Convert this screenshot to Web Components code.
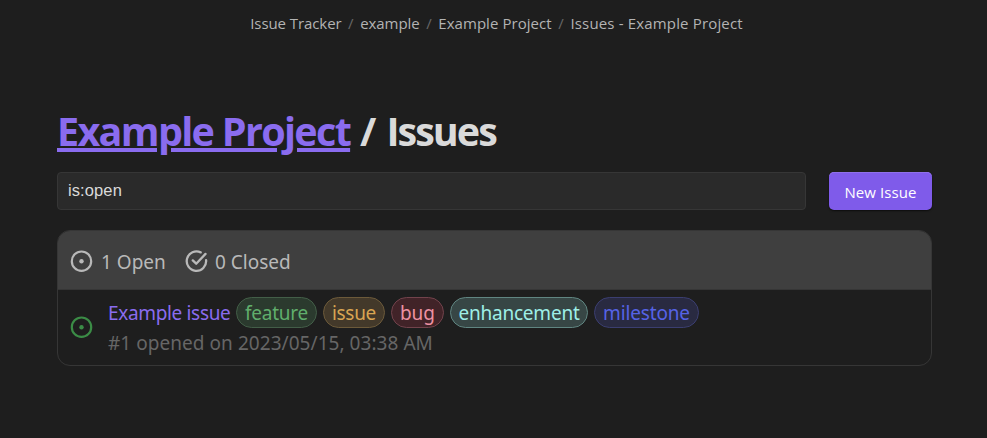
<!DOCTYPE html>
<html lang="en"><head><meta charset="utf-8"><title>Issues - Example Project</title>
<style>
html{background:#1e1e1e}
body{margin:0;height:438px;overflow:hidden;background:#1e1e1e;color:#dadada;font-family:"Open Sans","Noto Sans",sans-serif}
</style></head><body>
<issue-page></issue-page>
<script>
const define=(name,html)=>customElements.define(name,class extends HTMLElement{
  constructor(){super();this.attachShadow({mode:'open'}).innerHTML=html}
});

define('crumb-bar',`<style>
:host{display:flex;justify-content:center;height:48px;line-height:46px;font-size:15px;color:#b3b3b3;padding-left:6px;white-space:pre}
i{font-style:normal;color:#666;width:18.7px;text-align:center}
span{letter-spacing:-.08px}.mid{letter-spacing:.06px}.last{letter-spacing:.16px}
</style><span>Issue Tracker</span><i>/</i><span>example</span><i>/</i><span class="mid">Example Project</span><i>/</i><span class="last">Issues - Example Project</span>`);

define('page-title',`<style>
:host{display:block}
h1{margin:0;font-size:39.5px;line-height:54px;height:56px;font-weight:700;display:flex;white-space:pre;letter-spacing:-1.68px}
a{color:#8a6cef;text-decoration:underline;text-decoration-thickness:4px;text-underline-offset:2px;width:294px}
.slash{margin-left:9px;width:26.5px}
.here{letter-spacing:-2px}
</style><h1><a>Example Project</a><span class="slash">/</span> <span class="here">Issues</span></h1>`);

define('search-field',`<style>
:host{display:block;box-sizing:border-box;width:749px;height:38px;border:1px solid #363636;border-radius:4px;background:#2a2a2a;padding-left:10px;font:16.5px/35px "Liberation Sans",sans-serif;letter-spacing:.1px;color:#dadada}
</style><slot></slot>`);

define('action-button',`<style>
:host{display:flex;justify-content:center;box-sizing:border-box;width:103px;height:38px;border-radius:5px;background:#7f5bea;color:#fff;font-size:15px;line-height:40px;letter-spacing:.1px;box-shadow:inset 0 1px 0 #8f70ec,0 1px 2px #0009}
</style><slot></slot>`);

define('open-icon',`<style>:host{display:block;width:24px;height:24px}svg{display:block}</style>
<svg width="24" height="24" viewBox="0 0 24 24" fill="none" stroke="currentColor" stroke-width="2.2"><circle cx="12.5" cy="12.2" r="9.7"/><circle cx="12.5" cy="12.2" r="2.2" fill="currentColor" stroke="none"/></svg>`);

define('closed-icon',`<style>:host{display:block;width:24px;height:24px}svg{display:block}</style>
<svg width="24" height="24" viewBox="0 0 24 24" fill="none" stroke="currentColor" stroke-width="2.3" stroke-linecap="round" stroke-linejoin="round"><g transform="translate(.5 .2)"><path d="M16.2 3.2A9.7 9.7 0 1 0 21.6 11"/><path d="M8.3 11.2l3.4 3.3L21 4.7"/></g></svg>`);

define('issue-label',`<style>
:host{display:flex;justify-content:center;box-sizing:border-box;width:var(--w);height:31px;border:1px solid var(--line);border-radius:16px;background:var(--bg);color:var(--fg);line-height:31px;letter-spacing:var(--ls,0)}
</style><slot></slot>`);

define('issue-card',`<style>
:host{display:block;box-sizing:border-box;width:875px;height:136px;border:1px solid #363636;border-radius:13px;overflow:hidden;font-family:"Noto Sans","Open Sans",sans-serif;font-size:19px}
header{display:flex;height:59px;box-sizing:border-box;background:#3f3f3f;border-bottom:1px solid #363636;color:#b9b9b9;padding:18px 0 0 11px;line-height:26px}
header span{margin-left:8px;width:85px;white-space:nowrap}
header .closed{margin-left:7px}
open-icon,closed-icon{flex:none}
closed-icon{margin-left:-2px}
.row{display:flex;padding:7px 0 0 11px}
.row>open-icon{color:#3b8c46;margin:18px 15px 0 0}
.top{display:flex;gap:6px;line-height:32px;white-space:nowrap}
.name{color:#8a6cef;width:122px;letter-spacing:-.34px}
.meta{color:#666;line-height:28px;letter-spacing:.05px;white-space:nowrap}
</style><header><open-icon></open-icon><span>1 Open</span><closed-icon></closed-icon><span class="closed">0 Closed</span></header>
<div class="row"><open-icon></open-icon><div><div class="top"><span class="name">Example issue</span>
<issue-label style="--w:81px;--fg:#60ae6c;--bg:#2b3a2e;--line:#435e48;--ls:-.25px">feature</issue-label>
<issue-label style="--w:62px;--fg:#d9a552;--bg:#43392a;--line:#6c5a3a;--ls:-.3px">issue</issue-label>
<issue-label style="--w:53px;--fg:#ee91a2;--bg:#412328;--line:#72434c">bug</issue-label>
<issue-label style="--w:138px;--fg:#9eefe7;--bg:#374645;--line:#608581;--ls:-.22px">enhancement</issue-label>
<issue-label style="--w:105px;--fg:#5663e6;--bg:#292a41;--line:#3b3e70;--ls:-.15px">milestone</issue-label>
</div><div class="meta">#1 opened on 2023/05/15, 03:38 AM</div></div></div>`);

define('issue-page',`<style>
:host{display:block}
main{padding:56px 55px 0 57px}
.tools{display:flex;gap:23px;margin:12px 0 20px}
</style><crumb-bar></crumb-bar><main><page-title></page-title>
<div class="tools"><search-field>is:open</search-field><action-button>New Issue</action-button></div>
<issue-card></issue-card></main>`);
</script></body></html>
